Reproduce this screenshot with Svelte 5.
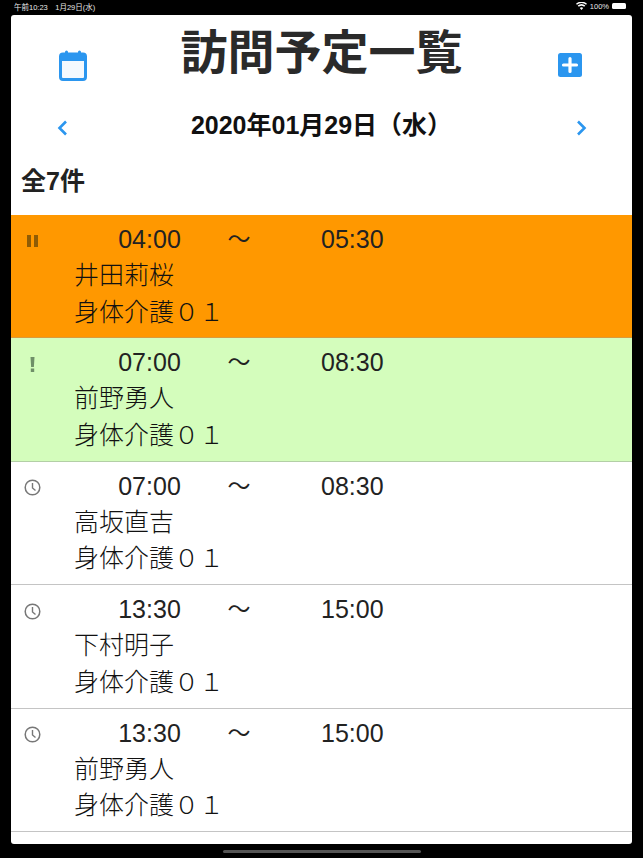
<script>
  const rows = [
    { start: '04:00', end: '05:30', name: '井田莉桜', tone: 'orange', icon: 'pause' },
    { start: '07:00', end: '08:30', name: '前野勇人', tone: 'green', icon: 'alert' },
    { start: '07:00', end: '08:30', name: '高坂直吉', tone: 'plain', icon: 'clock' },
    { start: '13:30', end: '15:00', name: '下村明子', tone: 'plain', icon: 'clock' },
    { start: '13:30', end: '15:00', name: '前野勇人', tone: 'plain', icon: 'clock' }
  ];
</script>

<div class="device">
  <div class="status">
    <span>午前10:23　1月29日(水)</span>
    <span class="status-right">
      <svg width="11" height="8" viewBox="0 0 22 16"><path d="M11 16l-3.4-4a5 5 0 0 1 6.8 0zM5.6 9.6 3.4 7.2a11.500 11.500 0 0 1 15.200 0l-2.200 2.400a8.300 8.300 0 0 0-10.800 0zM1.900 5.500 0 3.400a16.500 16.500 0 0 1 22 0l-1.900 2.100a13.700 13.700 0 0 0-18.200 0z" fill="#fff"/></svg>
      <span>100%</span>
      <span class="battery"></span>
    </span>
  </div>

  <main class="screen">
    <header class="head">
      <svg class="cal" width="28" height="32" viewBox="0 0 28 32">
        <rect x="1.500" y="5" width="25" height="25.500" rx="2.500" fill="#f4f9fe" stroke="#2b96ef" stroke-width="3"/>
        <path d="M1.500 7.500a2.500 2.500 0 0 1 2.500-2.500h20a2.500 2.500 0 0 1 2.500 2.500v4.500h-25z" fill="#2b96ef"/>
        <rect x="6" y="1.500" width="3" height="5" rx="1.500" fill="#2b96ef"/>
        <rect x="19" y="1.500" width="3" height="5" rx="1.500" fill="#2b96ef"/>
      </svg>
      <h1>訪問予定一覧</h1>
      <svg class="plus" width="24" height="24" viewBox="0 0 24 24">
        <rect width="24" height="24" rx="2.500" fill="#2b96ef"/>
        <path d="M12 5.500v13M5.500 12h13" stroke="#fff" stroke-width="3.200" stroke-linecap="round"/>
      </svg>
    </header>

    <nav class="dates">
      <svg width="11" height="16" viewBox="0 0 11 16"><path d="M9 1.500 2.500 8 9 14.500" fill="none" stroke="#2b96ef" stroke-width="2.600"/></svg>
      <strong>2020年01月29日（水）</strong>
      <svg width="11" height="16" viewBox="0 0 11 16"><path d="M2 1.500 8.500 8 2 14.500" fill="none" stroke="#2b96ef" stroke-width="2.600"/></svg>
    </nav>

    <p class="count">全7件</p>

    <ul class="list">
      {#each rows as r}
        <li class="row {r.tone}">
          <span class="icon">
            {#if r.icon === 'pause'}
              <svg width="11" height="12" viewBox="0 0 11 12"><path d="M0 0h4v12H0zM7 0h4v12H7z" fill="#8f5c05"/></svg>
            {:else if r.icon === 'alert'}
              <svg width="5" height="15" viewBox="0 0 5 15"><path d="M.500 0h4l-.600 10H1.100z" fill="#6f8f68"/><rect x=".800" y="11.500" width="3.400" height="3.500" fill="#6f8f68"/></svg>
            {:else}
              <svg width="17" height="17" viewBox="0 0 17 17"><circle cx="8.500" cy="8.500" r="7.300" fill="none" stroke="#777" stroke-width="1.500"/><path d="M8.500 4v5l3 2.500" fill="none" stroke="#777" stroke-width="1.400"/></svg>
            {/if}
          </span>
          <div class="body">
            <div class="times">
              <span class="t-start">{r.start}</span>
              <span class="tilde">〜</span>
              <span class="t-end">{r.end}</span>
            </div>
            <div class="line">{r.name}</div>
            <div class="line">身体介護０１</div>
          </div>
        </li>
      {/each}
    </ul>
  </main>

  <div class="home-zone"><span class="home"></span></div>
</div>

<style>
  :global(body) { margin: 0; background: #000; }
  .device {
    width: 643px; height: 858px; background: #000; overflow: hidden;
    display: flex; flex-direction: column;
    font-family: "Liberation Sans", "Noto Sans CJK JP", sans-serif;
  }
  .status {
    height: 15px; flex: none; padding: 0 17px 3px 14px; box-sizing: border-box;
    display: flex; justify-content: space-between; align-items: center;
    color: #e8e8e8; font-size: 7.500px; white-space: pre;
  }
  .status-right { display: flex; align-items: center; gap: 3px; }
  .battery { width: 14px; height: 6px; background: #fff; border-radius: 1.500px; display: block; }
  .screen {
    margin: 0 11px; height: 829px; flex: none; background: #fff; border-radius: 3px; overflow: hidden;
    color: #222;
  }
  .head {
    height: 76px; display: grid; grid-template-columns: 124px 1fr 124px; align-items: center; justify-items: center;
  }
  .cal { margin-top: 24px; }
  .plus { margin-top: 24px; }
  h1 { margin: 0; font-size: 47px; line-height: 76px; font-weight: 700; text-align: center; color: #2a2a2a; }
  .dates {
    height: 64px; display: grid; grid-template-columns: 102px 1fr 102px; align-items: center; justify-items: center;
  }
  .dates svg { margin-top: 10px; }
  .dates strong { font-size: 25px; color: #111; }
  .count { margin: 0; height: 60px; padding: 12px 0 0 10px; box-sizing: border-box; font-size: 25px; font-weight: 700; line-height: 28px; }
  .list { list-style: none; margin: 0; padding: 0; }
  .row {
    height: 123.400px; box-sizing: border-box; border-bottom: 1px solid #c4c4c4;
    display: flex; color: #222;
  }
  .orange { background: #ff9800; border-bottom-color: #d99a3e; }
  .green { background: #d4fdbc; border-bottom-color: #b3cfa6; }
  .icon { width: 43px; height: 52px; flex: none; display: flex; align-items: center; justify-content: center; }
  .body { padding: 6px 0 0 20px; font-size: 25px; }
  .times { display: flex; height: 36px; line-height: 37px; }
  .t-start { width: 63px; margin-left: 44px; text-align: center; }
  .tilde { width: 26px; margin-left: 45px; text-align: center; font-size: 23px; }
  .t-end { margin-left: 69px; }
  .line { height: 36.500px; line-height: 37.500px; font-weight: 300; color: #111; }
  .home-zone { flex: 1; display: flex; justify-content: center; align-items: center; }
  .home { width: 198px; height: 3px; border-radius: 2px; background: #555; display: block; }
</style>
